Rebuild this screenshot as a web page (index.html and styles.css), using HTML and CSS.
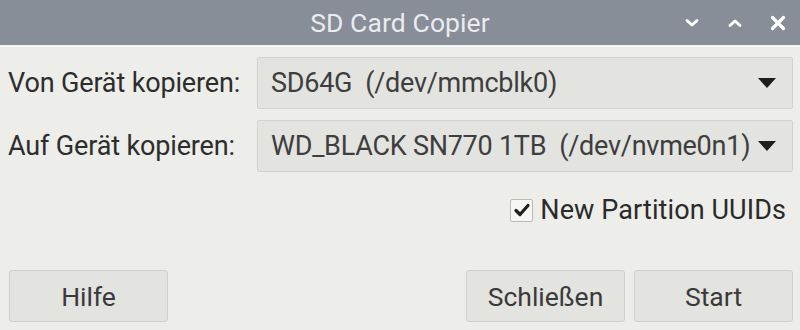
FILE: index.html
```html
<!DOCTYPE html>
<html>
<head>
<meta charset="utf-8">
<link rel="stylesheet" href="styles.css">
</head>
<body>
<div class="window">
  <div class="titlebar">
    <span class="title">SD Card Copier</span>
    <div class="controls">
      <svg class="ctl" width="16" height="12" viewBox="0 0 16 12"><path d="M3 3.5 L8 8 L13 3.5" fill="none" stroke="#fff" stroke-width="3" stroke-linecap="round" stroke-linejoin="round"/></svg>
      <svg class="ctl" width="16" height="12" viewBox="0 0 16 12"><path d="M3 8.5 L8 4 L13 8.5" fill="none" stroke="#fff" stroke-width="3" stroke-linecap="round" stroke-linejoin="round"/></svg>
      <svg class="ctl close" width="16" height="16" viewBox="0 0 16 16"><path d="M2.5 2.5 L13.5 13.5 M13.5 2.5 L2.5 13.5" fill="none" stroke="#fff" stroke-width="3.2" stroke-linecap="round"/></svg>
    </div>
  </div>
  <div class="content">
    <div class="form">
      <label class="label">Von Gerät kopieren:</label>
      <div class="combo"><span class="combo-text">SD64G  (/dev/mmcblk0)</span><span class="arrow"></span></div>
      <label class="label">Auf Gerät kopieren:</label>
      <div class="combo"><span class="combo-text">WD_BLACK SN770 1TB  (/dev/nvme0n1)</span><span class="arrow"></span></div>
    </div>
    <div class="check-row">
      <span class="checkbox"><svg width="18" height="18" viewBox="0 0 18 18"><path d="M3 9.5 L7 13.5 L15 4.5" fill="none" stroke="#1e1e1e" stroke-width="3.2" stroke-linecap="round" stroke-linejoin="round"/></svg></span>
      <span class="check-label">New Partition UUIDs</span>
    </div>
    <div class="buttons">
      <button class="btn">Hilfe</button>
      <div class="spacer"></div>
      <button class="btn">Schließen</button>
      <button class="btn">Start</button>
    </div>
  </div>
</div>
</body>
</html>
```

FILE: styles.css
```css
html, body {
  margin: 0;
  padding: 0;
  background: #ededea;
  font-family: Roboto, "Liberation Sans", sans-serif;
}
.window {
  width: 800px;
  height: 330px;
  overflow: hidden;
}
.titlebar {
  height: 45px;
  background: #878e98;
  position: relative;
  display: flex;
  align-items: center;
  justify-content: center;
  border-bottom: 2px solid #f4f4f2;
}
.title {
  color: #e9ebee;
  font-size: 26.5px;
  letter-spacing: 0.1px;
}
.controls {
  position: absolute;
  right: 14px;
  top: 15px;
  display: flex;
  align-items: center;
  gap: 27px;
}
.ctl { display: block; }
.content {
  padding: 10px 7px 0 8px;
}
.form {
  display: grid;
  grid-template-columns: 249px 1fr;
  row-gap: 11px;
  align-items: center;
}
.label {
  font-size: 27px;
  color: #2d2d2d;
  letter-spacing: -0.15px;
}
.combo {
  height: 50px;
  border: 1px solid #d2d2ce;
  border-radius: 2px;
  background: #e3e3e0;
  display: flex;
  align-items: center;
  padding: 0 16px 0 13px;
}
.combo-text {
  flex: 1;
  white-space: pre;
  font-size: 27px;
  color: #3e3e3e;
  letter-spacing: -0.25px;
}
.arrow {
  width: 0;
  height: 0;
  border-left: 9px solid transparent;
  border-right: 9px solid transparent;
  border-top: 10px solid #1e1e1e;
}
.check-row {
  display: flex;
  justify-content: flex-end;
  align-items: center;
  gap: 7px;
  margin-top: 22px;
  padding-right: 7px;
}
.checkbox {
  width: 21px;
  height: 21px;
  border: 1px solid #b9b9b6;
  border-radius: 2px;
  background: #f6f6f4;
  display: flex;
  align-items: center;
  justify-content: center;
}
.check-label {
  font-size: 27px;
  color: #2a2a2a;
  letter-spacing: 0.1px;
}
.buttons {
  display: flex;
  gap: 9px;
  margin-top: 44px;
  padding-left: 1px;
}
.spacer { flex: 1; }
.btn {
  width: 159px;
  height: 52px;
  border: 1px solid #cfcfcb;
  border-radius: 3px;
  background: #e3e3e0;
  font-family: Roboto, "Liberation Sans", sans-serif;
  font-size: 26.5px;
  color: #3a3a3a;
  padding: 0;
}
```
